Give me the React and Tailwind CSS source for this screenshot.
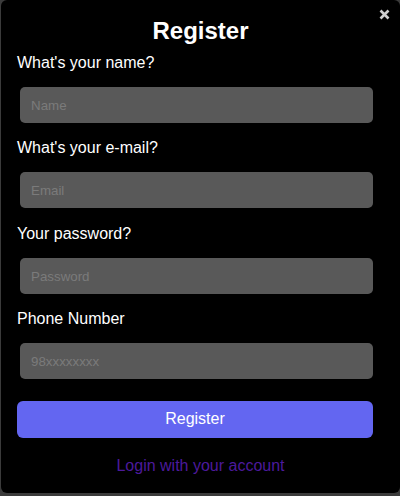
import React from "react";

function Field({ label, placeholder, type = "text", first }) {
  return (
    <div className={first ? "mt-[8px] flex flex-col" : "mt-[15.33px] flex flex-col"}>
      <label className="text-[16px] leading-[20px] text-white">{label}</label>
      <input
        type={type}
        placeholder={placeholder}
        className="mt-[14px] ml-[3px] w-[353px] h-[36px] bg-[#595959] rounded-[5px] pl-[11px] pt-px text-[13.33px] text-white placeholder:text-[#7b7b7b] outline-none"
      />
    </div>
  );
}

export default function App() {
  return (
    <div className="w-[400px] h-[496px] bg-[#3b3b3b] overflow-hidden font-['Liberation_Sans',Arial,sans-serif]">
      <div className="relative ml-px w-[399px] h-[493px] bg-black rounded-[6px] pt-[17px]">
        <button className="absolute left-[378px] top-[9px] w-[11px] h-[11px]" aria-label="close">
          <svg width="11" height="11" viewBox="0 0 11 11">
            <path d="M1.5 1.5 L9.5 9.5 M9.5 1.5 L1.5 9.5" stroke="#cfcfcf" strokeWidth="2.6" strokeLinecap="butt" />
          </svg>
        </button>
        <h1 className="text-center text-[24px] leading-[28px] font-bold text-white">Register</h1>
        <div className="pl-4 w-[372px] flex flex-col">
          <Field first label="What's your name?" placeholder="Name" />
          <Field label="What's your e-mail?" placeholder="Email" type="email" />
          <Field label="Your password?" placeholder="Password" type="password" />
          <Field label="Phone Number" placeholder="98xxxxxxxx" />
          <button className="mt-[22px] w-[356px] h-[37px] bg-[#6366f1] rounded-[6px] text-white text-[16px] leading-[20px]">
            Register
          </button>
        </div>
        <div className="mt-[17.7px] text-center text-[16px] leading-[20px] text-[#4c1a9c]">
          Login with your account
        </div>
      </div>
    </div>
  );
}
